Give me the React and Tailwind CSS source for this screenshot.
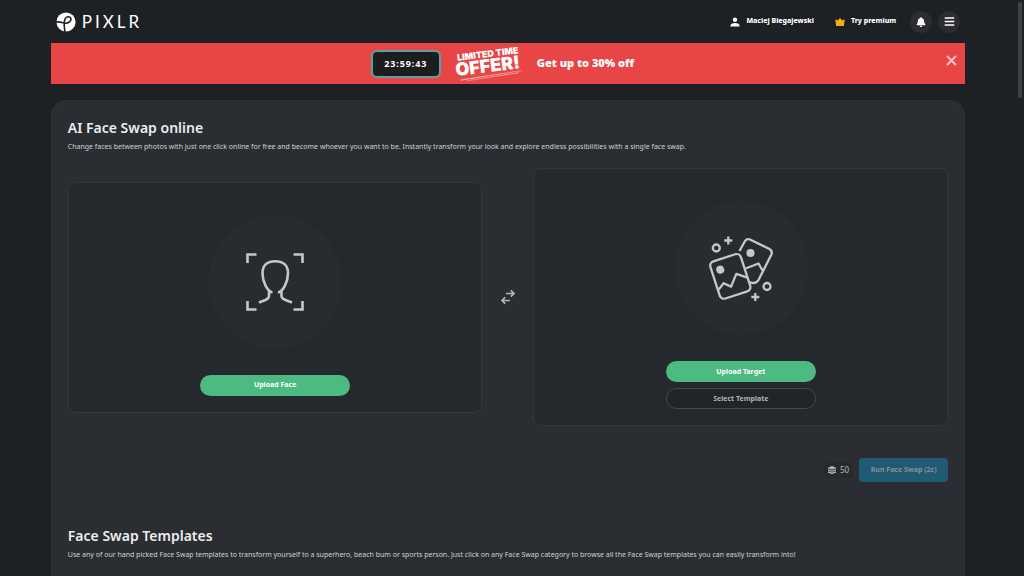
import { useState } from "react";
import { FaBell, FaBars } from "react-icons/fa";

function Logo() {
  return (
    <a href="#home" className="flex items-center gap-1.5 text-white" aria-label="Pixlr home">
      <svg viewBox="0 0 20 20" className="size-5" fill="none">
        <circle cx="10" cy="10" r="9.6" fill="#ffffff" />
        <path
          d="M0 10.200C3 9.200 5.500 10.600 8.600 11.200C12.500 11.600 15.600 9 14.800 6.300C13.900 3.900 10.300 4.300 9 7C7.600 10.200 8.200 15.400 9 20"
          stroke="#1e2123"
          strokeWidth="1.600"
        />
      </svg>
      <span className="font-[Lato] text-[17px] leading-5 tracking-[3px]">PIXLR</span>
    </a>
  );
}

function Header() {
  return (
    <header className="flex h-[43px] items-center justify-between px-[5px]">
      <Logo />
      <nav className="flex items-center text-[7px] font-extrabold text-white">
        <a href="#account" className="mr-[21px] flex items-center gap-1.5">
          <svg viewBox="0 0 10 10" className="size-[10px]" fill="currentColor">
            <circle cx="5" cy="2.800" r="2.200" />
            <path d="M0.500 9.400V8.600C0.500 6.800 3 6 5 6s4.500 0.800 4.500 2.600v0.800z" />
          </svg>
          Maciej Biegajewski
        </a>
        <a href="#premium" className="mr-3.5 flex items-center gap-1.5">
          <svg viewBox="0 0 10 10" className="size-[10px]" fill="#f0b012">
            <path d="M0.200 2.300L2.700 3.500L5 1L7.300 3.500L9.800 2.300L8.800 9H1.200z" />
          </svg>
          Try premium
        </a>
        <button aria-label="Notifications" className="mr-1.5 flex size-[22px] items-center justify-center rounded-full bg-[#2b2d31]">
          <FaBell className="size-[10px]" />
        </button>
        <button aria-label="Menu" className="flex size-[22px] items-center justify-center rounded-full bg-[#2b2d31]">
          <FaBars className="size-[11px]" />
        </button>
      </nav>
    </header>
  );
}

function OfferBadge() {
  return (
    <svg viewBox="0 0 68 38" className="h-[38px] w-[68px]" fill="#ffffff">
      <g transform="rotate(-7 34 19)" fontFamily="Inter, sans-serif" fontWeight="900">
        <text x="3" y="12" fontSize="9">LIMITED TIME</text>
        <text x="0" y="27" fontSize="18">OFFER!</text>
        <path d="M4 31L66 29.500L4 32z M10 33L62 31L62 31.500z" stroke="#ffffff" strokeWidth="0.300" opacity="0.600" />
      </g>
    </svg>
  );
}

function Banner({ onClose }) {
  return (
    <div className="flex h-[41px] items-center bg-[#e84646] px-2 text-white">
      <div className="flex flex-1 items-center justify-center">
        <time className="mr-3.5 flex h-7 w-[70px] items-center justify-center rounded-md border-2 border-[#5e9ea6] bg-[#1b1d1f] text-[9px] font-bold tracking-widest">
          23:59:43
        </time>
        <OfferBadge />
        <span className="ml-3.5 text-[11px] font-black">Get up to 30% off</span>
      </div>
      <button aria-label="Close offer" onClick={onClose} className="mb-1.5 text-[#f8c4c4]">
        <svg viewBox="0 0 11 11" className="size-[11px]" stroke="currentColor" strokeWidth="2">
          <path d="M1 1L10 10M10 1L1 10" />
        </svg>
      </button>
    </div>
  );
}

function FaceIcon() {
  return (
    <svg viewBox="0 0 58 58" className="size-[58px]" fill="none" stroke="currentColor" strokeWidth="2.600">
      <path d="M1.500 10V1.500H10.500M47.500 1.500H56.500V10M56.500 48V56.500H47.500M10.500 56.500H1.500V48" />
      <path
        d="M13 49.500C18 47 23 47 23 43V38.500M26.500 39.500C21 38.500 16.500 28 16.500 20C16.500 12 22 8.200 29.200 8.200S42 12 42 20C42 28 37.500 38.500 32 39.500M35.500 38.500V43C35.500 47 41 47 46 49.500"
        strokeLinejoin="round"
      />
    </svg>
  );
}

function PhotosIcon() {
  return (
    <svg viewBox="0 0 66 66" className="size-[66px]" fill="none" stroke="currentColor" strokeWidth="2.300" strokeLinejoin="round">
      {/* front photo */}
      <g transform="rotate(-18 22 42)">
        <rect x="6.500" y="22" width="32" height="39" rx="4.500" />
        <path d="M6.500 51L14 46L20 51.500L29 41L38.500 48" />
        <circle cx="15" cy="32" r="2.900" fill="currentColor" />
      </g>
      {/* photo behind it */}
      <path d="M31.500 16L37 6Q39 3.300 42 4.500L61 13.800Q64.800 15.800 63.400 19.500L50.500 45Q47.500 49.800 41.500 47" />
      <path d="M37.500 33.500L50.500 28.500L54.500 35.500" />
      <circle cx="42.500" cy="18" r="2.900" fill="currentColor" />
      <circle cx="8.300" cy="13" r="3.500" />
      <circle cx="59" cy="51.500" r="3.500" />
      <path d="M20.300 1.500V9.500M16.300 5.500H24.300M47.300 58V66M43.300 62H51.300" />
    </svg>
  );
}

function UploadBox({ icon, children }) {
  return (
    <div className="flex flex-col items-center rounded-lg border border-[#34373b] bg-[#25282c] px-4 pt-8 pb-4">
      <div className="mb-[26px] flex size-[134px] items-center justify-center rounded-full bg-[#282b2f] text-[#c6c7c9]">
        {icon}
      </div>
      <div className="flex w-[150px] flex-col gap-1.5 text-[7px] leading-3 font-bold">{children}</div>
    </div>
  );
}

function SectionTitle({ title, text }) {
  return (
    <div>
      <h2 className="text-sm leading-5 font-semibold text-[#ececed]">{title}</h2>
      <p className="mt-[3px] text-[7px] leading-3 text-[#d0d1d3]">{text}</p>
    </div>
  );
}

export default function App() {
  const [showBanner, setShowBanner] = useState(true);

  return (
    <div className="flex h-screen overflow-hidden bg-[#1e2123] font-['Noto_Sans','Open_Sans',sans-serif]">
      <div className="flex flex-1 flex-col">
        <div className="mx-auto flex w-9/10 flex-1 flex-col">
          <Header />
          {showBanner && <Banner onClose={() => setShowBanner(false)} />}

          <main className="mt-4 flex-1 rounded-t-2xl border border-b-0 border-[#2e3136] bg-[#2a2d31] px-4 pt-[17px]">
            <SectionTitle
              title="AI Face Swap online"
              text="Change faces between photos with just one click online for free and become whoever you want to be. Instantly transform your look and explore endless possibilities with a single face swap."
            />

            <section className="mt-[15px] grid grid-cols-[1fr_51px_1fr] items-center">
              <UploadBox icon={<FaceIcon />}>
                <button className="h-[21px] rounded-full bg-[#4dba82] text-white">Upload Face</button>
              </UploadBox>
              <svg viewBox="0 0 14 16" className="mx-auto h-4 w-3.5 text-[#b4b5b8]" fill="none" stroke="currentColor" strokeWidth="1.700">
                <path d="M5 4.500H13M9.800 1.300L13 4.500L9.800 7.700M9 11.500H1M4.200 8.300L1 11.500L4.200 14.700" />
              </svg>
              <UploadBox icon={<PhotosIcon />}>
                <button className="h-[21px] rounded-full bg-[#4dba82] text-white">Upload Target</button>
                <button className="h-[21px] rounded-full border border-[#46484d] bg-[#222528] text-[#b0b1b4]">
                  Select Template
                </button>
              </UploadBox>
            </section>

            <div className="mt-8 flex items-center justify-end gap-1.5">
              <span className="flex items-center gap-1 rounded-sm bg-[#272a2d] px-1 py-0.5 text-[8px] leading-3 text-[#b4b5b8]">
                <svg viewBox="0 0 8 8" className="size-2" fill="currentColor">
                  <path d="M0 1.700L4 0L8 1.700V2.400L4 3.600L0 2.400zM0 3.200L4 4.500L8 3.200V4.500L4 5.800L0 4.500zM0 5.300L4 6.600L8 5.300V6.700L4 8L0 6.700z" />
                </svg>
                50
              </span>
              <button className="h-6 w-[89px] rounded bg-[#205b73] text-[7px] font-bold text-[#839199]">
                Run Face Swap (2c)
              </button>
            </div>

            <div className="mt-11">
              <SectionTitle
                title="Face Swap Templates"
                text="Use any of our hand picked Face Swap templates to transform yourself to a superhero, beach bum or sports person. Just click on any Face Swap category to browse all the Face Swap templates you can easily transform into!"
              />
            </div>
          </main>
        </div>
      </div>

      {/* scrollbar */}
      <div className="w-2 px-0.5 pt-0.5">
        <div className="h-24 rounded-full bg-[#3f4245]" />
      </div>
    </div>
  );
}
